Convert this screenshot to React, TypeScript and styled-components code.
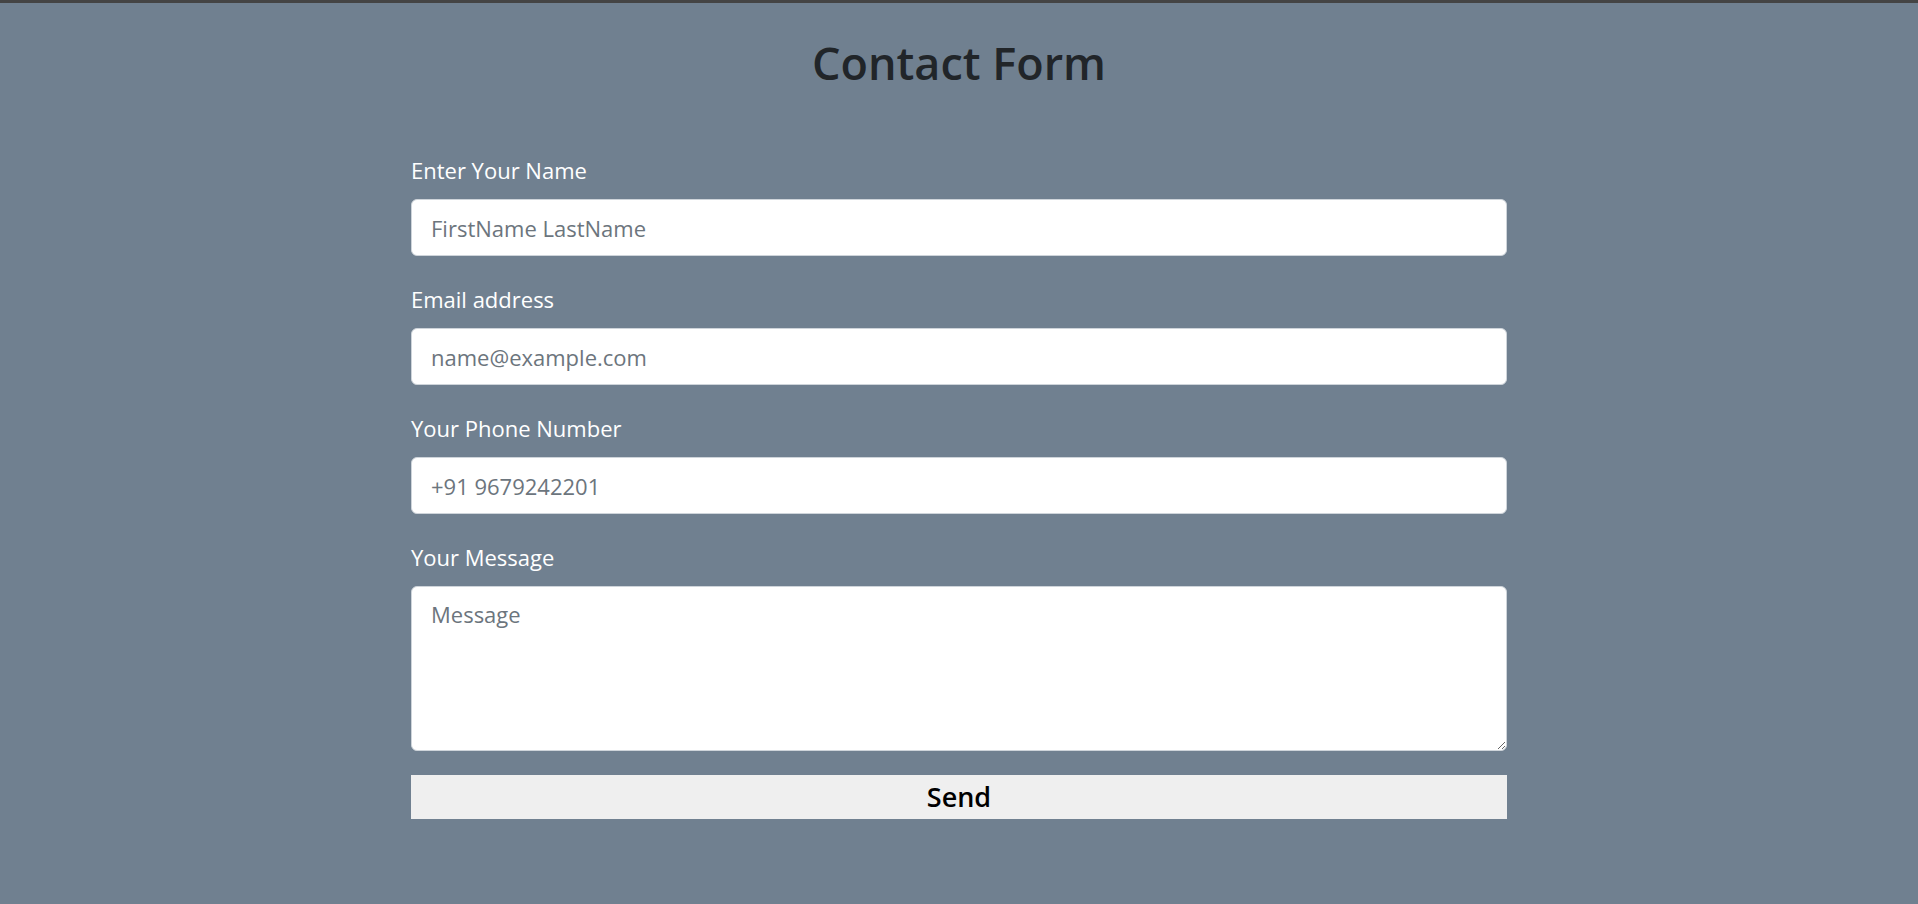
import React from "react";
import styled, { createGlobalStyle } from "styled-components";

const Global = createGlobalStyle`
  html, body { margin: 0; padding: 0; }
  body {
    background: #708090;
    font-family: "Open Sans", "Noto Sans", sans-serif;
    font-size: 24px;
    line-height: 1.5;
    color: #212529;
  }
  * { box-sizing: border-box; }
`;

const Page = styled.div`
  min-height: 904px;
  background: #708090;
  border-top: 3px solid #444;
  display: flex;
  flex-direction: column;
  align-items: center;
`;

const Title = styled.h2`
  margin: 33px 0 0;
  font-size: 45px;
  font-weight: 600;
  line-height: 1.2;
  color: #212529;
  text-align: center;
`;

const Form = styled.form`
  width: 1096px;
  margin-top: 61px;
  display: flex;
  flex-direction: column;
`;

const Field = styled.div`
  display: flex;
  flex-direction: column;
  margin-bottom: 24px;
`;

const Label = styled.label`
  color: #fff;
  font-size: 22px;
  line-height: 36px;
  padding-top: 1px;
  margin-bottom: 11px;
`;

const inputCss = `
  width: 100%;
  display: block;
  font-family: "Open Sans", "Noto Sans", sans-serif;
  font-size: 22px;
  line-height: 36px;
  padding: 9px 18px 9px 19px;
  color: #212529;
  background: #fff;
  border: 1.5px solid #ced4da;
  border-radius: 6px;
  outline: none;
  &::placeholder { color: #6c757d; opacity: 1; }
`;

const Input = styled.input`
  ${inputCss}
  height: 57px;
`;

const TextArea = styled.textarea`
  ${inputCss}
  height: 165px;
  resize: vertical;
`;

const SendButton = styled.button`
  width: 100%;
  height: 44px;
  padding: 0;
  border: none;
  background: #efefef;
  color: #000;
  font-family: "Open Sans", "Noto Sans", sans-serif;
  font-size: 27px;
  font-weight: 600;
  line-height: 44px;
  cursor: pointer;
`;

export default function App() {
  return (
    <>
      <Global />
      <Page>
        <Title>Contact Form</Title>
        <Form onSubmit={(e) => e.preventDefault()}>
          <Field>
            <Label htmlFor="name">Enter Your Name</Label>
            <Input id="name" type="text" placeholder="FirstName LastName" />
          </Field>
          <Field>
            <Label htmlFor="email">Email address</Label>
            <Input id="email" type="email" placeholder="name@example.com" />
          </Field>
          <Field>
            <Label htmlFor="phone">Your Phone Number</Label>
            <Input id="phone" type="tel" placeholder="+91 9679242201" />
          </Field>
          <Field>
            <Label htmlFor="msg">Your Message</Label>
            <TextArea id="msg" placeholder="Message" />
          </Field>
          <SendButton type="submit">Send</SendButton>
        </Form>
      </Page>
    </>
  );
}
